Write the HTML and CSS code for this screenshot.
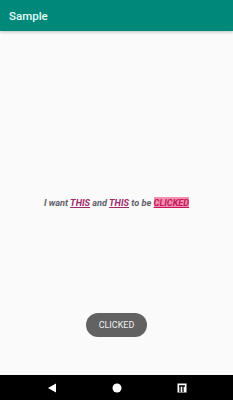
FILE: index.html
```html
<!DOCTYPE html>
<html lang="en">
<head>
  <meta charset="UTF-8" />
  <title>Sample</title>
  <link rel="stylesheet" href="styles.css">
</head>
<body>
  <div class="screen">
    <div class="app-bar">Sample</div>
    <div class="content">
      <p class="message">I want <span class="link">THIS</span> and <span class="link">THIS</span> to be <span class="link clicked">CLICKED</span></p>
      <div class="toast">CLICKED</div>
    </div>
    <div class="nav-bar">
      <svg width="10" height="10" viewBox="0 0 10 10"><polygon points="1,5 9,0.5 9,9.5" fill="#fff"/></svg>
      <svg width="10" height="10" viewBox="0 0 10 10"><circle cx="5" cy="5" r="4.5" fill="#fff"/></svg>
      <svg width="10" height="10" viewBox="0 0 10 10"><rect x="0.5" y="0.5" width="9" height="9" fill="#fff"/><path d="M2 3h6M3 3v6M6 3v6" stroke="#000" stroke-width="1.3" fill="none"/></svg>
    </div>
  </div>
</body>
</html>
```

FILE: styles.css
```css
* {
  box-sizing: border-box;
}

body {
  margin: 0;
  font-family: Roboto, "Liberation Sans", sans-serif;
  background-color: #fafafa;
}

.screen {
  height: 400px;
  display: flex;
  flex-direction: column;
}

.app-bar {
  height: 31px;
  background-color: #00897b;
  color: #e6fbf8;
  font-size: 11.5px;
  font-weight: 500;
  padding: 0 9px;
  display: flex;
  align-items: center;
  box-shadow: 0 1px 3px rgba(0,0,0,0.25);
  position: relative;
}

.content {
  flex: 1;
  display: flex;
  flex-direction: column;
  align-items: center;
}

.message {
  margin: 166px 0 0;
  font-size: 9.2px;
  font-style: italic;
  font-weight: bold;
  color: #5f5f6a;
}

.link {
  color: #a0286c;
  text-decoration: underline;
}

.link.clicked {
  background-color: #f48fb1;
  color: #c2185b;
}

.toast {
  margin-top: 105px;
  background-color: #626262;
  color: #f0f0f0;
  font-size: 9px;
  height: 24px;
  padding: 0 13px;
  border-radius: 12px;
  display: flex;
  align-items: center;
}

.nav-bar {
  height: 25px;
  background-color: #000;
  display: flex;
  align-items: center;
  justify-content: space-between;
  padding: 0 46px 0 47px;
}
```
